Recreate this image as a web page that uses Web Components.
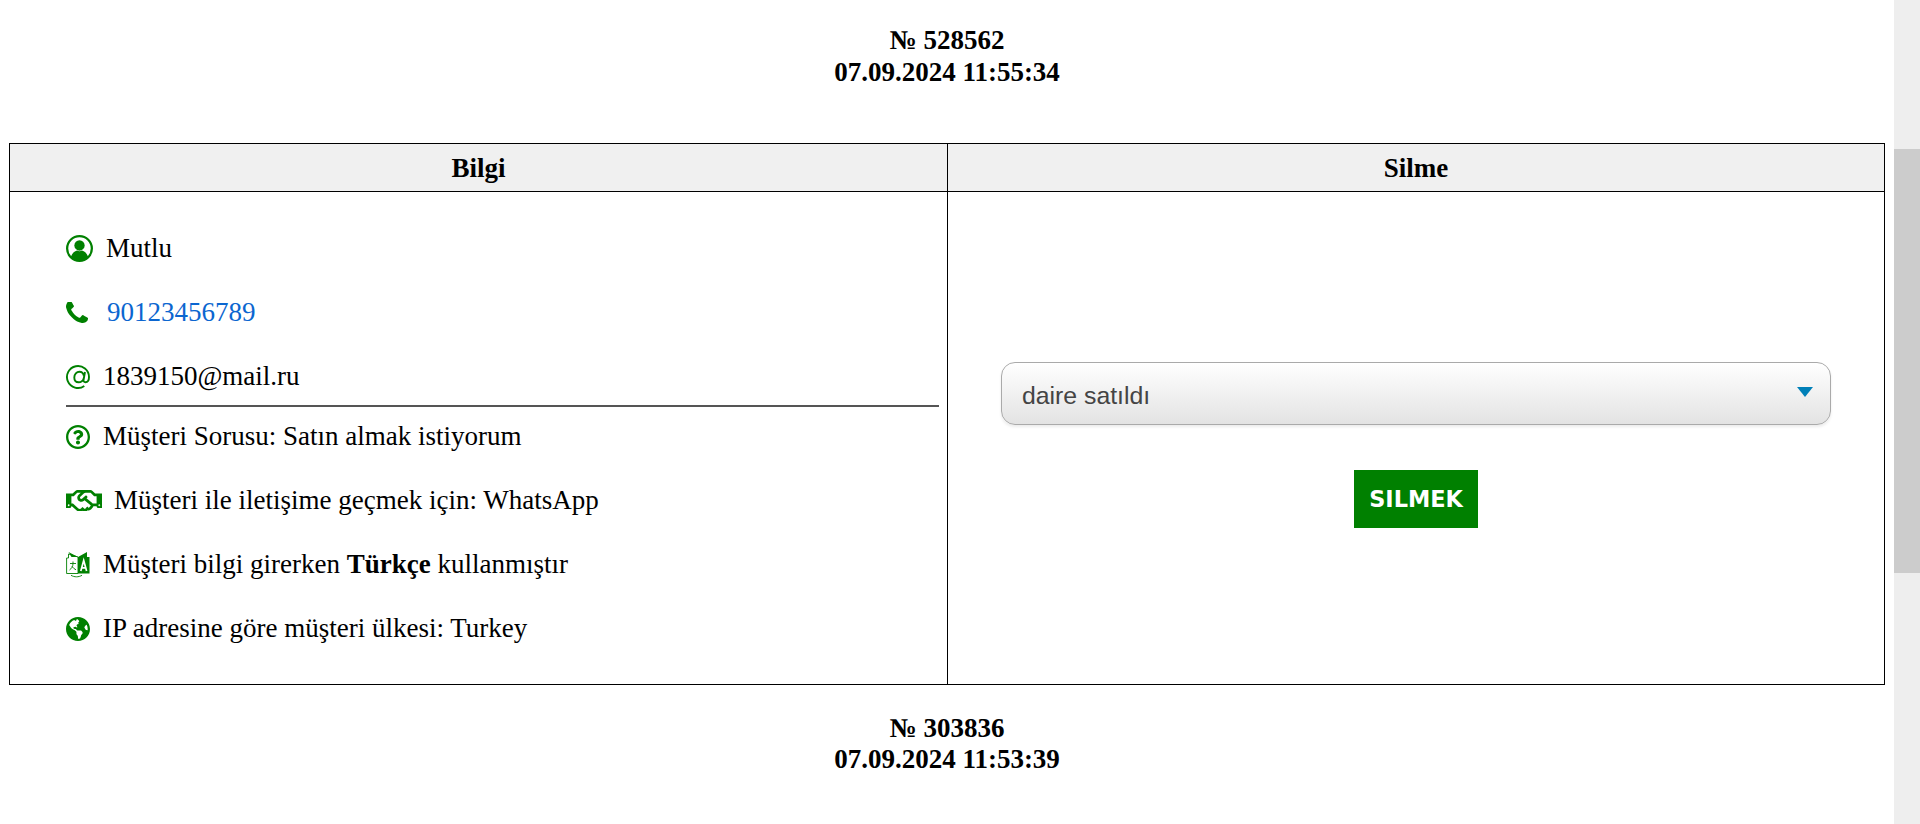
<!DOCTYPE html>
<html lang="tr"><head><meta charset="utf-8"><title>Bilgi</title>
<style>
html,body{margin:0;padding:0;height:824px;overflow:hidden;background:#fff}
body{font-family:"Liberation Serif",serif;font-size:27px;color:#000}
</style></head><body>
<app-shell>
  <order-title number="№ 528562" date="07.09.2024 11:55:34"></order-title>
  <order-card>
    <span slot="h1">Bilgi</span><span slot="h2">Silme</span>
    <info-row slot="info" icon="user"><span>Mutlu</span></info-row>
    <info-row slot="info" icon="phone"><a href="#" style="color:#0b66d0;text-decoration:none">90123456789</a></info-row>
    <info-row slot="info" icon="at"><span>1839150@mail.ru</span></info-row>
    <info-rule slot="info"></info-rule>
    <info-row slot="info" icon="question"><span>Müşteri Sorusu: Satın almak istiyorum</span></info-row>
    <info-row slot="info" icon="handshake"><span>Müşteri ile iletişime geçmek için: WhatsApp</span></info-row>
    <info-row slot="info" icon="language"><span>Müşteri bilgi girerken <b>Türkçe</b> kullanmıştır</span></info-row>
    <info-row slot="info" icon="globe"><span>IP adresine göre müşteri ülkesi: Turkey</span></info-row>
    <delete-form slot="action" value="daire satıldı" label="SILMEK"></delete-form>
  </order-card>
  <order-title class="second" number="№ 303836" date="07.09.2024 11:53:39"></order-title>
</app-shell>
<script>
const ICONS={
user:['0 0 24 24',27,13,'<circle cx="12" cy="12" r="11" fill="none" stroke="#008000" stroke-width="2"/><circle cx="12" cy="9.300" r="4.600"/><path d="M4.300 19.600c1-3.300 3.200-5.300 5.500-5.800 1.400.8 3 .8 4.400 0 2.300.5 4.500 2.500 5.500 5.800A11 11 0 0 1 12 23a11 11 0 0 1-7.700-3.400z"/>'],
phone:['192 192 1408 1408',22,19,'<path d="M1600 1240q0 27-10 70.500t-21 68.500q-21 50-122 106-94 51-186 51-27 0-53-3.500t-57.500-12.500-47-14.500-55.500-20.500-49-18q-98-35-175-83-127-79-264-216t-216-264q-48-77-83-175-3-9-18-49t-20.500-55.500-14.500-47-12.500-57.500-3.500-53q0-92 51-186 56-101 106-122 25-11 68.500-21t70.500-10q14 0 21 3 18 6 53 76 11 19 30 54t35 63.500 31 53.500q3 4 17.500 25t21.500 35.500 7 28.500q0 20-28.500 50t-62 55-62 53-28.500 46q0 9 5 22.500t8.500 20.500 14 24 11.500 19q76 137 174 235t235 174q2 1 19 11.500t24 14 20.500 8.500 22.500 5q18 0 46-28.500t53-62 55-62 50-28.500q14 0 28.500 7t35.500 21.500 25 17.500q25 15 53.500 31t63.500 35 54 30q70 35 76 53 3 7 3 21z"/>'],
at:['0 0 24 24',24,13,'<path fill="none" stroke="#008000" stroke-width="1.900" d="M18.300 21A11 11 0 1 1 23 12c0 3.200-1.600 5.200-3.500 5.200-1.600 0-2.200-1-1.900-2.700L19 7M17.700 13.500c-.8 2.400-2.800 3.800-5 3.800-2.700 0-4.400-2-4.400-4.800 0-3.400 2.400-5.800 5.100-5.800 2.500 0 4 1.800 4.400 4"/>'],
question:['8 8 496 496',24,13,'<path d="M256 8C119.043 8 8 119.083 8 256c0 136.997 111.043 248 248 248s248-111.003 248-248C504 119.083 392.957 8 256 8zm0 448c-110.532 0-200-89.431-200-200 0-110.495 89.472-200 200-200 110.491 0 200 89.471 200 200 0 110.530-89.431 200-200 200zm107.244-255.200c0 67.052-72.421 68.084-72.421 92.863V300c0 6.627-5.373 12-12 12h-45.647c-6.627 0-12-5.373-12-12v-8.659c0-35.745 27.100-50.034 47.579-61.516 17.561-9.845 28.324-16.541 28.324-29.579 0-17.246-21.999-28.693-39.784-28.693-23.189 0-33.894 10.977-48.942 29.969-4.057 5.120-11.460 6.071-16.666 2.124l-27.824-21.098c-5.107-3.872-6.251-11.066-2.644-16.363C184.846 131.491 214.940 112 261.794 112c49.071 0 101.450 38.304 101.450 88.800zM298 368c0 23.159-18.841 42-42 42s-42-18.841-42-42 18.841-42 42-42 42 18.841 42 42z"/>'],
handshake:['0 64 640 384',36,12,'<path d="M519.200 127.900l-47.600-47.600A56.252 56.252 0 0 0 432 64H205.200c-14.800 0-29.100 5.900-39.600 16.300L118 127.900H0v255.700h64c17.600 0 31.800-14.200 31.900-31.700h9.100l84.600 76.400c30.900 25.100 73.800 25.700 105.600 3.800 12.500 10.800 26 15.900 41.100 15.900 18.200 0 35.300-7.400 48.800-24 22.100 8.700 48.200 2.600 64-16.800l26.200-32.300c5.600-6.900 9.100-14.800 10.900-23h57.900c.1 17.500 14.400 31.700 31.900 31.700h64V127.900H519.200zM48 351.600c-8.800 0-16-7.200-16-16s7.200-16 16-16 16 7.200 16 16c0 8.900-7.200 16-16 16zm390-6.900l-26.100 32.200c-2.800 3.400-7.800 4-11.300 1.200l-23.900-19.400-30 36.500c-6 7.300-15 4.800-18 2.400l-36.800-31.500-15.600 19.200c-13.900 17.100-39.200 19.700-55.300 6.600l-97.300-88H96V175.800h41.900l61.700-61.600c2-.8 3.700-1.500 5.700-2.300H262l-38.700 35.500c-29.400 26.900-31.100 72.300-4.400 101.300 14.800 16.200 61.200 41.200 101.500 4.400l8.200-7.500 108.200 87.800c3.400 2.800 3.900 7.900 1.200 11.300zm106-40.800h-69.200c-2.300-2.800-4.900-5.400-7.700-7.700l-102.700-83.400 12.500-11.400c6.500-6 7-16.100 1-22.600L367 167.100c-6-6.500-16.100-6.900-22.600-1l-55.200 50.600c-9.500 8.700-25.700 9.400-34.600 0-9.300-9.900-8.500-25.100 1.200-33.900l65.600-60.100c7.400-6.800 17-10.500 27-10.500l83.700-.2c2.100 0 4.100.8 5.500 2.300l61.700 61.600H544v128zm48 47.700c-8.800 0-16-7.200-16-16s7.200-16 16-16 16 7.200 16 16c0 8.900-7.200 16-16 16z"/>'],
language:['0 0 24 27',24,13,'<path d="M12 6 2.500 3V7H.6v15.500H12z" fill="#fff" stroke="#008000" stroke-width=".9"/><path d="M2.500 1 12 6H5.500z"/><path d="M12 6h11.500v16.500H12zM12 6l9-5v5z"/><path d="M4 12.500h6M7 10.500v2c0 3-1.500 5-3.500 6.500M6 15.500c1 1.400 2.400 2.500 4 3.300" fill="none" stroke="#008000" stroke-width=".9"/><path d="M14.800 20 17.700 9.500 20.600 20M15.800 16.800h3.800" fill="none" stroke="#fff" stroke-width="1.700"/><path d="M5 24.300c3.500 2 7.500 2 11 0" fill="none" stroke="#008000" stroke-width=".9"/>'],
globe:['0 8 496 496',24,13,'<path d="M248 8C111.030 8 0 119.030 0 256s111.030 248 248 248 248-111.030 248-248S384.970 8 248 8zm82.290 357.600c-3.900 3.880-7.990 7.950-11.310 11.280-2.990 3-5.100 6.700-6.170 10.710-1.510 5.660-2.730 11.380-4.770 16.870l-17.390 46.850c-13.760 3-28 4.690-42.650 4.690v-27.380c1.690-12.620-7.640-36.260-22.630-51.250-6-6-9.370-14.140-9.370-22.630v-32.010c0-11.640-6.270-22.340-16.460-27.970-14.370-7.950-34.810-19.060-48.810-26.110-11.480-5.780-22.100-13.140-31.650-21.750l-.8-.72a114.792 114.792 0 0 1-18.060-20.740c-9.380-13.770-24.660-36.420-34.590-51.140 20.470-45.500 57.360-82.040 103.200-101.890l24.010 12.010C203.480 89.740 216 82.010 216 70.110v-11.300c7.990-1.290 16.120-2.110 24.390-2.420l28.300 28.300c6.250 6.250 6.250 16.380 0 22.630L264 112l-10.340 10.340c-3.120 3.120-3.120 8.190 0 11.310l4.690 4.690c3.120 3.120 3.120 8.190 0 11.310l-8 8a8.008 8.008 0 0 1-5.660 2.340h-8.990c-2.080 0-4.080.81-5.580 2.270l-9.920 9.650a8.008 8.008 0 0 0-1.580 9.310l15.590 31.190c2.660 5.320-1.210 11.580-7.150 11.580h-5.640c-1.930 0-3.790-.7-5.240-1.960l-9.280-8.060a16.017 16.017 0 0 0-15.550-3.100l-31.170 10.390a11.950 11.950 0 0 0-8.170 11.340c0 4.530 2.560 8.660 6.610 10.690l11.080 5.540c9.410 4.710 19.790 7.160 30.310 7.160s22.590 27.290 32 32h66.750c8.490 0 16.620 3.370 22.630 9.370l13.690 13.690a30.503 30.503 0 0 1 8.930 21.570 46.536 46.536 0 0 1-13.720 32.980zM417 274.250c-5.790-1.450-10.840-5-14.150-9.970l-17.980-26.970a23.970 23.970 0 0 1 0-26.620l19.590-29.380c2.320-3.470 5.500-6.290 9.240-8.150l12.980-6.490C440.200 193.590 448 223.870 448 256c0 8.670-.74 17.160-1.820 25.540L417 274.250z"/>']
};
function def(name,html,init){customElements.define(name,class extends HTMLElement{
  constructor(){super();this.attachShadow({mode:'open'}).innerHTML=html}
  connectedCallback(){init&&init.call(this,this.shadowRoot)}
})}
def('app-shell',`<style>
:host{display:flex;width:1920px;height:824px;overflow:hidden}
main{flex:1;min-width:0;padding-top:24px;box-sizing:border-box}
.track{flex:0 0 26px;background:#eee;display:flex;flex-direction:column}
.track i{display:block;flex:0 0 424px;margin-top:149px;background:#ccc}
</style><main><slot></slot></main><div class="track"><i></i></div>`);
def('order-title',`<style>
:host{display:block;text-align:center;font-weight:bold;line-height:32px;height:119px}
:host(.second){height:auto;padding-top:28px;line-height:31px}
</style><div id="n"></div><div id="d"></div>`,function(s){s.getElementById('n').textContent=this.getAttribute('number');s.getElementById('d').textContent=this.getAttribute('date')});
def('order-card',`<style>
:host{display:grid;grid-template-columns:938px 1fr;grid-template-rows:48px 492px;width:1876px;margin-left:9px;box-sizing:border-box;border:1px solid #000}
.h{background:#f0f0f0;display:flex;align-items:center;justify-content:center;font-weight:bold;border-bottom:1px solid #000;padding-top:1px;box-sizing:border-box}
.l{border-right:1px solid #000}
.info{display:flex;flex-direction:column;gap:33px;padding:41px 8px 0 56px;min-width:0}
.action{display:flex;flex-direction:column;align-items:center}
</style><div class="h l"><slot name="h1"></slot></div><div class="h"><slot name="h2"></slot></div>
<div class="info l"><slot name="info"></slot></div><div class="action"><slot name="action"></slot></div>`);
def('info-row',`<style>
:host{display:flex;align-items:center;height:31px;white-space:nowrap}
svg{fill:#008000;flex:none}
</style><svg id="i"></svg><slot></slot>`,function(s){
  const [vb,w,gap,p]=ICONS[this.getAttribute('icon')],g=s.getElementById('i');
  const v=vb.split(' ').map(Number);
  g.setAttribute('viewBox',vb);g.setAttribute('width',w);g.setAttribute('height',w*v[3]/v[2]);
  g.innerHTML=p;
  g.style.marginRight=gap+'px';
});
def('info-rule',`<style>:host{display:block;height:2px;background:#555;margin:-20px 0 -19px}</style>`);
def('delete-form',`<style>
:host{display:flex;flex-direction:column;align-items:center;padding-top:170px}
.sel{width:830px;height:63px;box-sizing:border-box;border:1px solid #aaa;border-radius:14px;background:linear-gradient(#fff,#e3e3e3);box-shadow:0 2px 3px rgba(0,0,0,.08);display:flex;align-items:center;justify-content:space-between;padding:5px 17px 0 20px;font:24.8px "Liberation Sans",sans-serif;color:#444}
.sel i{width:0;height:0;border:8px solid transparent;border-top:10px solid #0080b8;border-bottom:0;margin-top:-8px}
.b{margin-top:45px;width:124px;height:58px;background:#008000;color:#fff;font:bold 22.4px "DejaVu Sans",sans-serif;display:flex;align-items:center;justify-content:center}
</style><div class="sel"><span id="v"></span><i></i></div><div class="b" id="b"></div>`,function(s){s.getElementById('v').textContent=this.getAttribute('value');s.getElementById('b').textContent=this.getAttribute('label')});
</script>
</body></html>
